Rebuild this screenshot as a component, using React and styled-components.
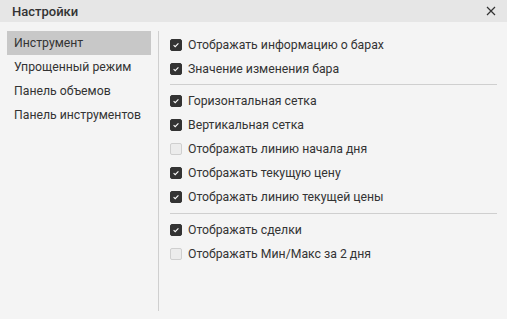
import React from "react";
import styled, { createGlobalStyle } from "styled-components";

const Global = createGlobalStyle`
  html, body { margin: 0; padding: 0; background: #f4f4f4; }
  body { font-family: Roboto, "Noto Sans", sans-serif; color: #333; }
  * { box-sizing: border-box; }
`;

const Dialog = styled.div`
  width: 507px;
  height: 319px;
  background: #f4f4f4;
  display: flex;
  flex-direction: column;
`;

const Header = styled.div`
  height: 22px;
  background: #e6e6e6;
  display: flex;
  align-items: center;
  justify-content: space-between;
  padding: 0 10px 0 12px;
`;

const Title = styled.div`
  font-size: 13px;
  font-weight: 500;
  color: #333;
`;

const Close = styled.button`
  border: 0;
  background: none;
  padding: 0;
  width: 12px;
  height: 12px;
  display: flex;
  align-items: center;
  justify-content: center;
  cursor: pointer;
`;

const Body = styled.div`
  flex: 1;
  display: flex;
  padding: 9px 0 8px 7px;
`;

const Sidebar = styled.div`
  width: 152px;
  display: flex;
  flex-direction: column;
  border-right: 1px solid #cfcfcf;
  padding-right: 7px;
`;

const NavItem = styled.div`
  height: 24px;
  display: flex;
  align-items: center;
  padding-left: 7px;
  font-size: 12.25px;
  color: #333;
  background: ${(p) => (p.$active ? "#c8c8c8" : "transparent")};
`;

const Content = styled.div`
  flex: 1;
  padding: 2px 10px 0 11px;
  display: flex;
  flex-direction: column;
`;

const Row = styled.label`
  height: 24px;
  display: flex;
  align-items: center;
  gap: 6px;
  font-size: 12.25px;
  color: #333;
`;

const Box = styled.span`
  width: 12px;
  height: 12px;
  border-radius: 2px;
  flex: none;
  display: flex;
  align-items: center;
  justify-content: center;
  background: ${(p) => (p.$checked ? "#333" : "#ececec")};
  border: 1px solid ${(p) => (p.$checked ? "#333" : "#cfcfcf")};
`;

const Divider = styled.div`
  height: 1px;
  background: #cfcfcf;
  margin: ${(p) => p.$margin};
`;

const Check = () => (
  <svg width="8" height="8" viewBox="0 0 8 8">
    <path d="M1.6 4.2 L3.2 5.7 L6.4 2.4" fill="none" stroke="#fff" strokeWidth="1.1" />
  </svg>
);

const Item = ({ checked, children }) => (
  <Row>
    <Box $checked={checked}>{checked && <Check />}</Box>
    {children}
  </Row>
);

export default function App() {
  return (
    <>
      <Global />
      <Dialog>
        <Header>
          <Title>Настройки</Title>
          <Close aria-label="close">
            <svg width="10" height="10" viewBox="0 0 10 10">
              <path d="M1 1 L9 9 M9 1 L1 9" stroke="#333" strokeWidth="1.2" />
            </svg>
          </Close>
        </Header>
        <Body>
          <Sidebar>
            <NavItem $active>Инструмент</NavItem>
            <NavItem>Упрощенный режим</NavItem>
            <NavItem>Панель объемов</NavItem>
            <NavItem>Панель инструментов</NavItem>
          </Sidebar>
          <Content>
            <Item checked>Отображать информацию о барах</Item>
            <Item checked>Значение изменения бара</Item>
            <Divider $margin="3px 0 4px" />
            <Item checked>Горизонтальная сетка</Item>
            <Item checked>Вертикальная сетка</Item>
            <Item>Отображать линию начала дня</Item>
            <Item checked>Отображать текущую цену</Item>
            <Item checked>Отображать линию текущей цены</Item>
            <Divider $margin="4px 0 4px" />
            <Item checked>Отображать сделки</Item>
            <Item>Отображать Мин/Макс за 2 дня</Item>
          </Content>
        </Body>
      </Dialog>
    </>
  );
}
